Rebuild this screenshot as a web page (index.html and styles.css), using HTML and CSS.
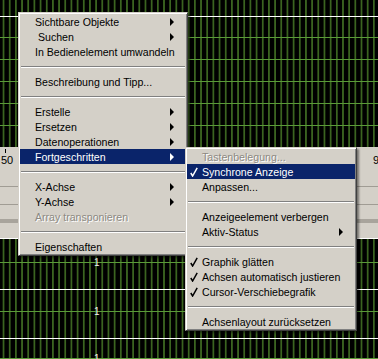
FILE: index.html
```html
<!DOCTYPE html>
<html lang="de">
<head>
  <meta charset="UTF-8">
  <title>Kontextmenü</title>
  <link rel="stylesheet" href="styles.css">
</head>
<body>
  <div class="screen">

    <!-- Oberer Graph -->
    <div class="plot-top">
      <div class="plot-area"></div>
    </div>

    <!-- Skala / Leiste -->
    <div class="axis">
      <div class="scale">
        <span class="scale-left">50</span>
        <span class="scale-right">9</span>
      </div>
      <div class="bar bar-1"></div>
      <div class="bar bar-2"></div>
      <div class="bar bar-3"></div>
    </div>

    <!-- Kleine Graphen -->
    <div class="plot plot-a"><div class="level"><span>1</span></div></div>
    <div class="plot plot-b"><div class="level"><span>1</span></div></div>
    <div class="plot plot-c"><div class="level"><span>1</span></div></div>

    <!-- Hauptmenü -->
    <ul class="menu menu-main">
      <li class="item"><span></span><span>Sichtbare Objekte</span><span class="arrow"></span></li>
      <li class="item"><span></span><span>&nbsp;Suchen</span><span class="arrow"></span></li>
      <li class="item"><span></span><span>In Bedienelement umwandeln</span><span></span></li>
      <li class="sep"></li>
      <li class="item"><span></span><span>Beschreibung und Tipp...</span><span></span></li>
      <li class="sep"></li>
      <li class="item"><span></span><span>Erstelle</span><span class="arrow"></span></li>
      <li class="item"><span></span><span>Ersetzen</span><span class="arrow"></span></li>
      <li class="item"><span></span><span>Datenoperationen</span><span class="arrow"></span></li>
      <li class="item active"><span></span><span>Fortgeschritten</span><span class="arrow"></span></li>
      <li class="sep"></li>
      <li class="item"><span></span><span>X-Achse</span><span class="arrow"></span></li>
      <li class="item"><span></span><span>Y-Achse</span><span class="arrow"></span></li>
      <li class="item disabled"><span></span><span>Array transponieren</span><span></span></li>
      <li class="sep"></li>
      <li class="item"><span></span><span>Eigenschaften</span><span></span></li>
    </ul>

    <!-- Untermenü Fortgeschritten -->
    <ul class="menu menu-sub">
      <li class="item disabled"><span></span><span>Tastenbelegung...</span><span></span></li>
      <li class="item active"><span class="check"><svg width="8" height="10" viewBox="0 0 8 10"><polyline points="0.8,6 2.6,9 7.2,0.8"/></svg></span><span>Synchrone Anzeige</span><span></span></li>
      <li class="item"><span></span><span>Anpassen...</span><span></span></li>
      <li class="sep"></li>
      <li class="item"><span></span><span>Anzeigeelement verbergen</span><span></span></li>
      <li class="item"><span></span><span>Aktiv-Status</span><span class="arrow"></span></li>
      <li class="sep"></li>
      <li class="item"><span class="check"><svg width="8" height="10" viewBox="0 0 8 10"><polyline points="0.8,6 2.6,9 7.2,0.8"/></svg></span><span>Graphik glätten</span><span></span></li>
      <li class="item"><span class="check"><svg width="8" height="10" viewBox="0 0 8 10"><polyline points="0.8,6 2.6,9 7.2,0.8"/></svg></span><span>Achsen automatisch justieren</span><span></span></li>
      <li class="item"><span class="check"><svg width="8" height="10" viewBox="0 0 8 10"><polyline points="0.8,6 2.6,9 7.2,0.8"/></svg></span><span>Cursor-Verschiebegrafik</span><span></span></li>
      <li class="sep"></li>
      <li class="item"><span></span><span>Achsenlayout zurücksetzen</span><span></span></li>
    </ul>

  </div>
</body>
</html>
```

FILE: styles.css
```css
body {
  margin: 0;
  background-color: black;
  font-family: "Liberation Sans", Arial, sans-serif;
}

.screen {
  position: relative;
  width: 378px;
  height: 359px;
  overflow: hidden;
  background-color: #000;
  background-image: linear-gradient(to right, transparent 3px, #3b6420 3px 4px, transparent 4px);
  background-size: 6.18px 100%;
}

/* oberer Graph */
.plot-top {
  height: 147px;
  padding-top: 16px;
  box-sizing: border-box;
}
.plot-area {
  height: 100%;
  border-top: 1px solid #fff;
  background-image: linear-gradient(to bottom, transparent 20px, #5a9a38 20px 21px, transparent 21px);
  background-size: 100% 22px;
}

/* Leiste in der Mitte */
.axis {
  height: 91px;
  background-color: #d4d0c8;
  display: flex;
  flex-direction: column;
}
.scale {
  height: 40px;
  display: flex;
  justify-content: space-between;
  align-items: flex-start;
  font-size: 11px;
  color: #000;
  padding-top: 7px;
  box-sizing: border-box;
  border-bottom: 1px solid #a09c94;
}
.scale-left {
  margin-left: 1px;
  position: relative;
}
.scale-left::before {
  content: "";
  position: absolute;
  left: 4px;
  top: -5px;
  width: 1px;
  height: 4px;
  background-color: #000;
}
.scale-right {
  margin-right: -1px;
}
.bar {
  border-bottom: 1px solid #a09c94;
}
.bar-1 {
  height: 17px;
}
.bar-2 {
  height: 14px;
  border-bottom: 4px solid #a8a49c;
}
.bar-3 {
  flex: 1;
  border-bottom: none;
}

/* kleine Graphen */
.plot {
  border-top: 1px solid #fff;
  box-sizing: border-box;
}
.plot-a {
  height: 51px;
  padding-top: 18px;
}
.plot-b {
  height: 49px;
  padding-top: 16px;
}
.plot-c {
  height: 30px;
  padding-top: 14px;
}
.level {
  height: 11px;
  display: flex;
  align-items: center;
  background: linear-gradient(to bottom, transparent 5px, #5a9a38 5px 6px, transparent 6px);
}
.level span {
  margin-left: 94px;
  color: #f0f0f0;
  font-size: 10px;
  line-height: 11px;
}

/* Menüs */
.menu {
  position: absolute;
  margin: 0;
  padding: 0;
  list-style: none;
  background-color: #d4d0c8;
  border: 1px solid;
  border-color: #d4d0c8 #404040 #404040 #d4d0c8;
  box-shadow: inset 1px 1px 0 #fff, inset -1px -1px 0 #808080, 2px 2px 2px rgba(0, 0, 0, 0.45);
  padding: 1px;
  font-size: 10.6px;
  color: #000;
}
.menu-main {
  left: 18px;
  top: 12px;
  width: 166px;
}
.menu-sub {
  left: 185px;
  top: 147px;
  width: 168px;
}
.item {
  height: 15px;
  display: grid;
  grid-template-columns: 15px 1fr 16px;
  align-items: center;
  white-space: nowrap;
}
.item.active {
  background-color: #0a246a;
  color: #fff;
}
.item.disabled {
  color: #8c8982;
  text-shadow: 1px 1px 0 #fff;
}
.arrow {
  width: 0;
  height: 0;
  border-left: 4px solid #000;
  border-top: 4px solid transparent;
  border-bottom: 4px solid transparent;
}
.active .arrow {
  border-left-color: #fff;
}
.check {
  display: flex;
  padding-left: 3px;
}
.check svg {
  fill: none;
  stroke: #000;
  stroke-width: 1.5;
}
.active .check svg {
  stroke: #fff;
}
.sep {
  height: 15px;
  display: flex;
  flex-direction: column;
  justify-content: center;
  padding: 0 1px;
}
.sep::before {
  content: "";
  border-top: 1px solid #808080;
  border-bottom: 1px solid #fff;
}
```
